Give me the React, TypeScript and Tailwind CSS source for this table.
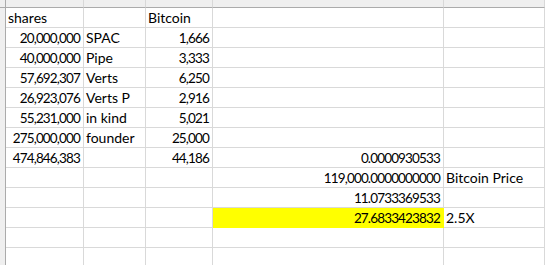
const cols = [
  { key: 'A', w: 'w-[78px]' },
  { key: 'B', w: 'w-[62px]' },
  { key: 'C', w: 'w-[67px]' },
  { key: 'D', w: 'w-[231px]' },
  { key: 'E', w: 'flex-1' },
]

// right = number (right aligned, set a little narrower like the sheet's digits)
type Cell = { v: string; right?: boolean; fill?: boolean }

const rows: Record<string, Cell>[] = [
  { A: { v: 'shares' }, C: { v: 'Bitcoin' } },
  { A: { v: '20,000,000', right: true }, B: { v: 'SPAC' }, C: { v: '1,666', right: true } },
  { A: { v: '40,000,000', right: true }, B: { v: 'Pipe' }, C: { v: '3,333', right: true } },
  { A: { v: '57,692,307', right: true }, B: { v: 'Verts' }, C: { v: '6,250', right: true } },
  { A: { v: '26,923,076', right: true }, B: { v: 'Verts P' }, C: { v: '2,916', right: true } },
  { A: { v: '55,231,000', right: true }, B: { v: 'in kind' }, C: { v: '5,021', right: true } },
  { A: { v: '275,000,000', right: true }, B: { v: 'founder' }, C: { v: '25,000', right: true } },
  { A: { v: '474,846,383', right: true }, C: { v: '44,186', right: true }, D: { v: '0.0000930533', right: true } },
  { D: { v: '119,000.0000000000', right: true }, E: { v: 'Bitcoin Price' } },
  { D: { v: '11.0733369533', right: true } },
  { D: { v: '27.6833423832', right: true, fill: true }, E: { v: '2.5X' } },
  {},
  {},
]

export default function App() {
  return (
    <div
      className="w-[545px] h-[265px] overflow-hidden bg-white text-[14px] text-black"
      style={{ fontFamily: 'Lato, "Liberation Sans", sans-serif' }}
    >
      {/* column header strip, mostly scrolled off */}
      <div className="flex h-[8px]">
        <div className="w-[6px] h-[8px] bg-[#efefef] border-r border-b border-[#ababab]" />
        {cols.map((c) => (
          <div
            key={c.key}
            className={c.w + ' h-[8px] bg-[#efefef] border-r border-b border-r-[#d8d8d8] border-b-[#ababab] overflow-hidden flex items-end justify-center'}
          >
            <span className="leading-none mb-[5px] text-[#444444]">{c.key}</span>
          </div>
        ))}
      </div>

      {rows.map((r, i) => (
        <div key={i} className="flex h-[20px]">
          <div className="w-[6px] h-[20px] bg-[#efefef] border-r border-[#ababab]" />
          {cols.map((c) => {
            const cell = r[c.key]
            return (
              <div
                key={c.key}
                className={
                  c.w +
                  ' h-[20px] border-r border-b border-[#d9d9d9] whitespace-nowrap leading-[20px] overflow-visible ' +
                  (cell?.right ? 'text-right pr-[3px] text-[13.5px] tracking-[-0.85px] ' : 'pl-[2px] ') +
                  (cell?.fill ? 'bg-[#ffff00] border-[#ffff00] ' : '')
                }
              >
                {cell?.v}
              </div>
            )
          })}
        </div>
      ))}
    </div>
  )
}
